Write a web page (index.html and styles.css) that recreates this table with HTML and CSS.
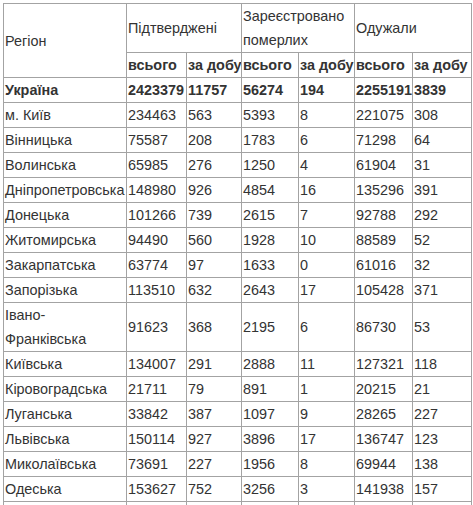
FILE: index.html
```html
<!DOCTYPE html>
<html lang="uk">
<head>
<meta charset="utf-8">
<title>COVID-19 по регіонах</title>
<link rel="stylesheet" href="styles.css">
</head>
<body>
<div class="wrap">
<table class="stats">
  <colgroup>
    <col class="c-region"><col class="c1"><col class="c2"><col class="c3"><col class="c4"><col class="c5"><col class="c6">
  </colgroup>
  <thead>
    <tr class="h1">
      <th rowspan="2">Регіон</th>
      <th colspan="2">Підтверджені</th>
      <th colspan="2">Зареєстровано померлих</th>
      <th colspan="2">Одужали</th>
    </tr>
    <tr class="h2">
      <th>всього</th><th>за добу</th><th>всього</th><th>за добу</th><th>всього</th><th>за добу</th>
    </tr>
  </thead>
  <tbody>
    <tr class="total"><td>Україна</td><td>2423379</td><td>11757</td><td>56274</td><td>194</td><td>2255191</td><td>3839</td></tr>
    <tr><td>м. Київ</td><td>234463</td><td>563</td><td>5393</td><td>8</td><td>221075</td><td>308</td></tr>
    <tr><td>Вінницька</td><td>75587</td><td>208</td><td>1783</td><td>6</td><td>71298</td><td>64</td></tr>
    <tr><td>Волинська</td><td>65985</td><td>276</td><td>1250</td><td>4</td><td>61904</td><td>31</td></tr>
    <tr><td>Дніпропетровська</td><td>148980</td><td>926</td><td>4854</td><td>16</td><td>135296</td><td>391</td></tr>
    <tr><td>Донецька</td><td>101266</td><td>739</td><td>2615</td><td>7</td><td>92788</td><td>292</td></tr>
    <tr><td>Житомирська</td><td>94490</td><td>560</td><td>1928</td><td>10</td><td>88589</td><td>52</td></tr>
    <tr><td>Закарпатська</td><td>63774</td><td>97</td><td>1633</td><td>0</td><td>61016</td><td>32</td></tr>
    <tr><td>Запорізька</td><td>113510</td><td>632</td><td>2643</td><td>17</td><td>105428</td><td>371</td></tr>
    <tr><td>Івано-Франківська</td><td>91623</td><td>368</td><td>2195</td><td>6</td><td>86730</td><td>53</td></tr>
    <tr><td>Київська</td><td>134007</td><td>291</td><td>2888</td><td>11</td><td>127321</td><td>118</td></tr>
    <tr><td>Кіровоградська</td><td>21711</td><td>79</td><td>891</td><td>1</td><td>20215</td><td>21</td></tr>
    <tr><td>Луганська</td><td>33842</td><td>387</td><td>1097</td><td>9</td><td>28265</td><td>227</td></tr>
    <tr><td>Львівська</td><td>150114</td><td>927</td><td>3896</td><td>17</td><td>136747</td><td>123</td></tr>
    <tr><td>Миколаївська</td><td>73691</td><td>227</td><td>1956</td><td>8</td><td>69944</td><td>138</td></tr>
    <tr><td>Одеська</td><td>153627</td><td>752</td><td>3256</td><td>3</td><td>141938</td><td>157</td></tr>
    <tr class="more"><td></td><td></td><td></td><td></td><td></td><td></td><td></td></tr>
  </tbody>
</table>
</div>
</body>
</html>
```
FILE: styles.css
```css
html, body {
  margin: 0;
  padding: 0;
  background: #ffffff;
}
.wrap {
  padding: 3px 0 0 3px;
}
.stats {
  border-collapse: collapse;
  table-layout: fixed;
  width: 469px;
  font-family: "Liberation Sans", Arial, sans-serif;
  font-size: 14.4px;
  line-height: 24px;
  color: #333333;
}
.c-region { width: 123px; }
.c1 { width: 60px; }
.c2 { width: 55px; }
.c3 { width: 57px; }
.c4 { width: 56px; }
.c5 { width: 58px; }
.c6 { width: 59px; }
.stats th,
.stats td {
  border: 1px solid #a3a3a3;
  padding: 0 0 0 1px;
  text-align: left;
  vertical-align: middle;
  font-weight: normal;
}
.stats .h2 th {
  font-weight: bold;
  white-space: nowrap;
  overflow: hidden;
}
.stats .total td {
  font-weight: bold;
  white-space: nowrap;
}
.stats .more td {
  height: 24px;
}
```
